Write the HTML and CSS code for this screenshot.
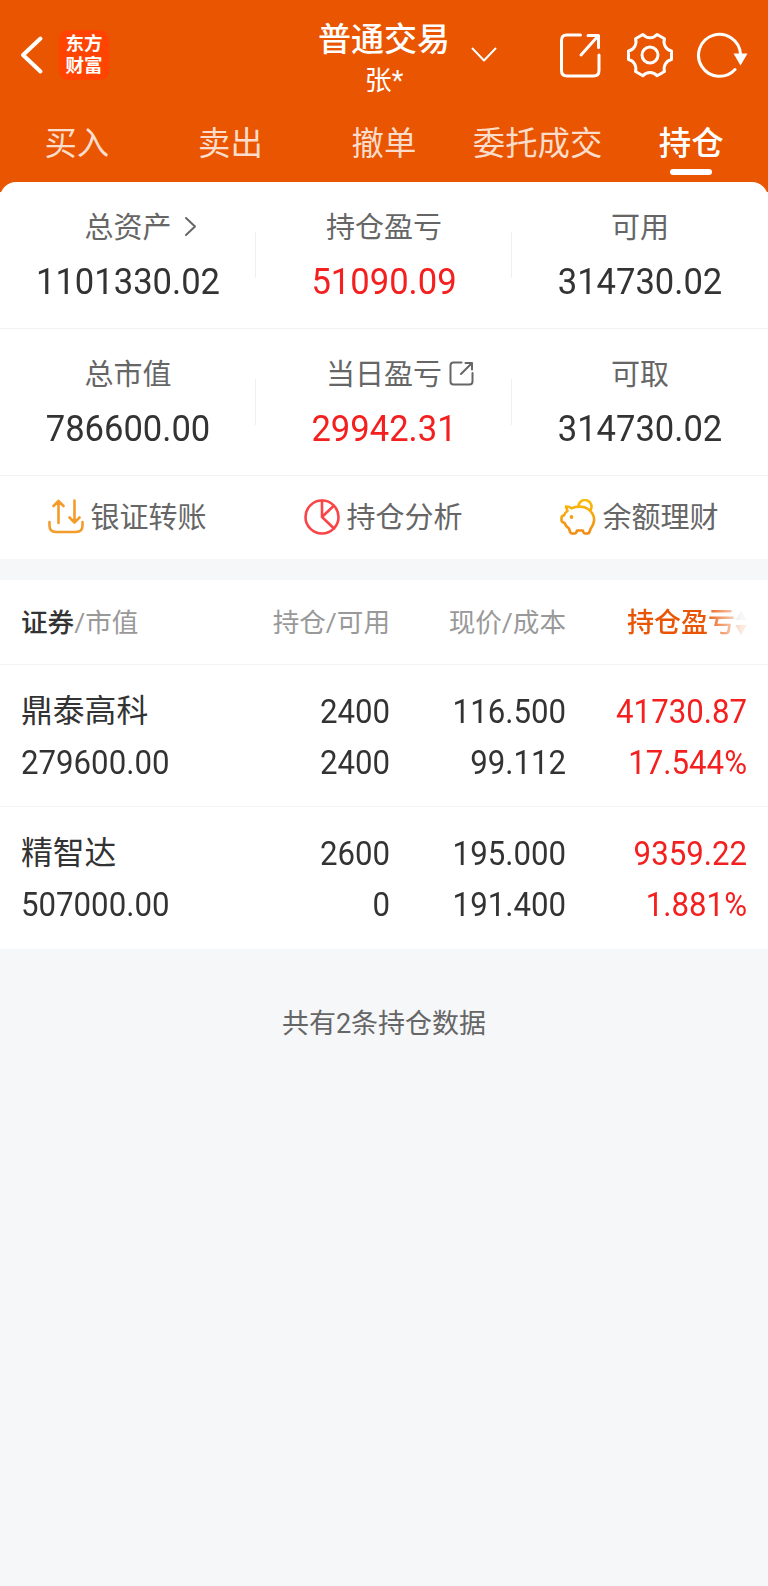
FILE: index.html
```html
<!DOCTYPE html>
<html lang="zh-CN">

<head>
    <meta charset="UTF-8">
    <title>普通交易 - 持仓</title>
    <link rel="stylesheet" href="styles.css">
</head>

<body>
    <header class="header">
        <div class="topbar">
            <div class="topbar-left">
                <svg class="back" width="24" height="40" viewBox="0 0 24 40">
                    <path d="M20.5 3.5L3 20l17.5 16.5" />
                </svg>
                <div class="logo">东方<br>财富</div>
            </div>
            <div class="title">
                <div class="title-main">普通交易</div>
                <div class="title-sub">张*</div>
            </div>
            <div class="topbar-right">
                <svg class="arrow-down" width="26" height="16" viewBox="0 0 26 16">
                    <path d="M1.5 1.5L13 13.5l11.500-12" />
                </svg>
                <div class="tools">
                    <svg width="48" height="48" viewBox="0 0 48 48">
                        <path d="M24.500 4H10.500Q5.500 4 5.500 9.500v30q0 5.500 5.500 5.500h26.500q5.500 0 5.500-5.500V24" />
                        <path d="M32 4.500h10.500v12M42.500 4.500L25 24" />
                    </svg>
                    <svg width="48" height="48" viewBox="0 0 48 48">
                        <path d="M45.500 20V28.500A9.500 9.500 0 0 0 38.500 40.500L31.100 44.800A9.500 9.500 0 0 0 16.900 44.800L9.500 40.500A9.500 9.500 0 0 0 2.500 28.500V20A9.500 9.500 0 0 0 9.500 7.800L16.900 3.500A9.500 9.500 0 0 0 31.100 3.500L38.500 7.800A9.500 9.500 0 0 0 45.500 20Z" />
                        <circle cx="24" cy="24" r="8" />
                    </svg>
                    <svg width="52" height="48" viewBox="0 0 52 48">
                        <path d="M39 38.500A21 21 0 1 1 44.500 23" />
                        <path class="fill" d="M37.500 22.500h14l-7 12z" />
                    </svg>
                </div>
            </div>
        </div>
        <nav class="tabs">
            <div class="tab">买入</div>
            <div class="tab">卖出</div>
            <div class="tab">撤单</div>
            <div class="tab">委托成交</div>
            <div class="tab active">持仓</div>
        </nav>
    </header>

    <section class="summary">
        <div class="metrics">
            <div class="metric">
                <div class="label">总资产<svg class="more" width="14" height="22" viewBox="0 0 14 22">
                        <path d="M2 2l9 8.500-9 8.500" />
                    </svg></div>
                <div class="value num">1101330.02</div>
            </div>
            <div class="metric">
                <div class="label">持仓盈亏</div>
                <div class="value num red">51090.09</div>
            </div>
            <div class="metric">
                <div class="label">可用</div>
                <div class="value num">314730.02</div>
            </div>
        </div>
        <div class="metrics">
            <div class="metric">
                <div class="label">总市值</div>
                <div class="value num">786600.00</div>
            </div>
            <div class="metric">
                <div class="label">当日盈亏<svg class="open" width="25" height="25" viewBox="0 0 25 25">
                        <path d="M12.500 1.500H4.500Q1.500 1.500 1.500 4.500v16q0 3 3 3h16q3 0 3-3V12" />
                        <path d="M16.500 2h6.500v6.500M23 2L12 13" />
                    </svg></div>
                <div class="value num red">29942.31</div>
            </div>
            <div class="metric">
                <div class="label">可取</div>
                <div class="value num">314730.02</div>
            </div>
        </div>
        <div class="actions">
            <div class="action">
                <svg class="transfer" width="36" height="36" viewBox="0 0 36 36">
                    <path d="M1.500 23v3.500q0 6.500 6.500 6.500h20q6.500 0 6.500-6.500V23" />
                    <path d="M10.500 24V2M5.500 7l5-5 5 5M26.500 1.500v22M21.500 18.500l5 5 5-5" />
                </svg>
                <span>银证转账</span>
            </div>
            <div class="action">
                <svg class="pie" width="36" height="36" viewBox="0 0 36 36">
                    <circle cx="18" cy="18" r="16.500" />
                    <path d="M18 1.500V18l12 11.500M18 18L29.500 7" />
                </svg>
                <span>持仓分析</span>
            </div>
            <div class="action">
                <svg class="pig" width="36" height="36" viewBox="0 0 36 36">
                    <defs>
                        <linearGradient id="gold" x1="0" y1="0" x2="0" y2="36" gradientUnits="userSpaceOnUse">
                            <stop offset="0" stop-color="#f9bd0b" />
                            <stop offset="1" stop-color="#f08a14" />
                        </linearGradient>
                    </defs>
                    <path d="M6 7.500q3.500 0 5.500 1.700C17 7 24 7 28 10c5 3.500 6.500 7.500 6 12-.4 4-2.500 6-3.500 8l-1 3q-.5 1.500-2 1.500H25q-1.300 0-1.700-1.500l-.5-1.500H17l-.5 1.500q-.4 1.500-1.700 1.500h-3q-1.300 0-1.700-1.500L9 29.500Q5.500 27 4.500 24l-2-1q-1-.5-1-1.500V18.500q0-1 1-1.500l1.500-.7Q5 13.500 7.500 12Z" />
                    <path d="M18.500 7.500a6.500 6.500 0 1 1 12 3.500" />
                    <circle class="eye" cx="11.500" cy="18" r="1.900" />
                </svg>
                <span>余额理财</span>
            </div>
        </div>
    </section>

    <section class="holdings">
        <div class="row head">
            <div><b>证券</b>/市值</div>
            <div>持仓/可用</div>
            <div>现价/成本</div>
            <div class="sort">
                <span>持仓盈亏</span>
                <svg width="12" height="24" viewBox="0 0 12 24">
                    <path fill="#bbb" d="M6 0l5.500 9H.5z" />
                    <path fill="#e95504" d="M6 24l5.500-10H.5z" />
                </svg>
            </div>
        </div>
        <div class="row stock">
            <div>
                <div class="name">鼎泰高科</div>
                <div class="num">279600.00</div>
            </div>
            <div>
                <div class="num">2400</div>
                <div class="num">2400</div>
            </div>
            <div>
                <div class="num">116.500</div>
                <div class="num">99.112</div>
            </div>
            <div class="red">
                <div class="num">41730.87</div>
                <div class="num">17.544%</div>
            </div>
        </div>
        <div class="row stock">
            <div>
                <div class="name">精智达</div>
                <div class="num">507000.00</div>
            </div>
            <div>
                <div class="num">2600</div>
                <div class="num">0</div>
            </div>
            <div>
                <div class="num">195.000</div>
                <div class="num">191.400</div>
            </div>
            <div class="red">
                <div class="num">9359.22</div>
                <div class="num">1.881%</div>
            </div>
        </div>
    </section>

    <footer class="total">共有2条持仓数据</footer>
</body>

</html>
```
FILE: styles.css
```css
* {
    box-sizing: border-box;
}

body {
    margin: 0;
    min-height: 1586px;
    background-color: #f6f7f9;
    color: #333;
    font-family: Roboto, "Noto Sans CJK SC", sans-serif;
}

svg {
    flex: none;
    fill: none;
    stroke-width: 2.6;
    stroke-linecap: round;
    stroke-linejoin: round;
}

.red {
    color: #f4201f;
}

/* tall, narrow figures */
.num {
    transform: scaleY(1.07);
}

/* header */

.header {
    padding-bottom: 10px;
    background-color: #e95500;
    color: white;
}

.header svg {
    stroke: white;
    stroke-width: 3;
}

.topbar {
    height: 110px;
    display: grid;
    grid-template-columns: 1fr 132px 1fr;
}

.topbar-left {
    display: flex;
    align-items: center;
    padding-left: 20px;
}

.header .back {
    stroke-width: 4;
}

.logo {
    width: 50px;
    height: 50px;
    margin-left: 15px;
    padding-top: 3px;
    border-radius: 9px;
    background-color: #ff4300;
    font-size: 18.5px;
    font-weight: 700;
    line-height: 22px;
    text-align: center;
}

.title {
    padding-top: 17px;
    text-align: center;
    white-space: nowrap;
}

.title-main {
    font-size: 33px;
    font-weight: 500;
    line-height: 45px;
}

.title-sub {
    font-size: 27px;
    line-height: 39px;
}

.topbar-right {
    display: flex;
    align-items: center;
    padding: 0 20px 0 21px;
}

.header .arrow-down {
    stroke-width: 2;
}

.tools {
    display: flex;
    gap: 22px;
    margin-left: auto;
}

.tools .fill {
    fill: white;
    stroke: none;
}

.tabs {
    height: 72px;
    display: grid;
    grid-template-columns: repeat(5, 1fr);
}

.tab {
    display: flex;
    flex-direction: column;
    align-items: center;
    padding-top: 5px;
    color: #fcdccb;
    font-size: 32.4px;
    line-height: 59px;
}

.tab.active {
    color: white;
    font-weight: 500;
}

.tab.active::after {
    content: "";
    width: 42px;
    height: 6px;
    margin-top: -5px;
    border-radius: 3px;
    background-color: white;
}

/* account summary */

.summary {
    margin-top: -10px;
    border-radius: 16px 16px 0 0;
    background-color: white;
}

.metrics {
    height: 147px;
    display: grid;
    grid-template-columns: repeat(3, 1fr);
    border-bottom: 1px solid #f2f2f3;
}

.metric {
    padding-top: 25px;
    text-align: center;
    background: linear-gradient(#efefef, #efefef) no-repeat right 50px / 1px 46px;
}

.metric:last-child {
    background: none;
}

.label {
    display: flex;
    align-items: center;
    justify-content: center;
    color: #666;
    font-size: 29px;
    line-height: 42px;
}

.label svg {
    stroke: #666;
    stroke-width: 2;
}

/* icons hang to the right so the label text stays centred */
.label .more {
    margin: -3px -26px 0 12px;
}

.label .open {
    margin: -3px -32px 0 7px;
}

.value {
    margin-top: 5px;
    font-size: 34.6px;
    line-height: 54px;
}

.actions {
    height: 83px;
    display: grid;
    grid-template-columns: repeat(3, 1fr);
    padding-bottom: 1px;
}

.action {
    display: flex;
    align-items: center;
    justify-content: center;
    gap: 6px;
    padding-right: 1px;
    color: #666;
    font-size: 29px;
    line-height: 40px;
}

.action span {
    padding-top: 2px;
}

.transfer {
    stroke: #f39c2b;
}

.pie {
    stroke: #fa4548;
}

.pig {
    stroke: url(#gold);
}

.pig .eye {
    fill: #f4a010;
    stroke: none;
}

/* holdings */

.holdings {
    margin-top: 21px;
    background-color: white;
}

.row {
    display: grid;
    grid-template-columns: 194px 175px 176px 181px;
    padding: 0 21px;
    text-align: right;
    border-bottom: 1px solid #f3f4f5;
}

.row > div:first-child {
    text-align: left;
}

.head {
    height: 85px;
    color: #999;
    font-size: 26.6px;
    line-height: 86px;
}

.head b {
    color: #333;
    font-weight: 500;
}

.sort {
    height: 86px;
    display: flex;
    align-items: center;
    justify-content: flex-end;
    color: #e95504;
    font-size: 27px;
    font-weight: 500;
    -webkit-mask-image: linear-gradient(to right, #000 76%, rgba(0, 0, 0, .12) 97%);
    mask-image: linear-gradient(to right, #000 76%, rgba(0, 0, 0, .12) 97%);
}

.sort svg {
    stroke: none;
}

.stock {
    height: 142px;
    padding-top: 21px;
    font-size: 31.2px;
    line-height: 51px;
}

.stock:last-child {
    border-bottom: none;
}

.name {
    font-size: 31.8px;
}

.total {
    margin-top: 55px;
    color: #666;
    font-size: 27px;
    line-height: 40px;
    text-align: center;
}
```
